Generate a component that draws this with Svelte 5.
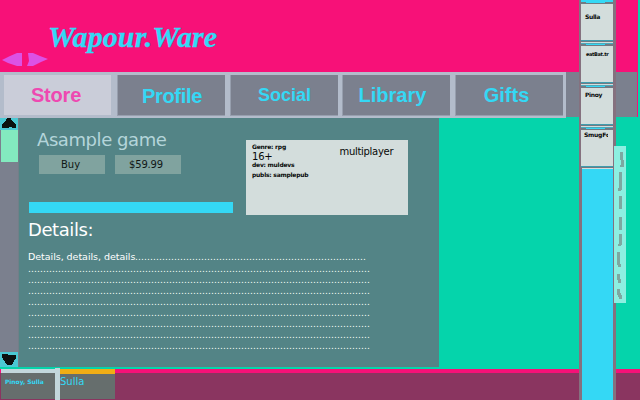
<script>
  const tabs = [
    { label: 'Store', active: true },
    { label: 'Profile' },
    { label: 'Social' },
    { label: 'Library' },
    { label: 'Gifts' }
  ];
  const friends = ['Sulla', 'eatBat.tr', 'Pinoy', 'SmugFc'];
  const dots = (n) => '.'.repeat(n);
  const rows = Array.from({ length: 8 }, () => dots(114));
</script>

<div class="app">
  <header>
    <div class="brand">Wapour.Ware</div>
    <svg class="arrows" width="46" height="13" viewBox="0 0 46 13">
      <path d="M0 7L8 3L15 0H20V13H15L6 10ZM26 0H31L38 3L46 6L39 9L31 13H25L27 8Z" />
    </svg>
  </header>

  <nav>
    <div class="tabs">
      {#each tabs as tab}
        <div class="tab {tab.label.toLowerCase()}" class:active={tab.active}><span>{tab.label}</span></div>
      {/each}
    </div>
  </nav>

  <main>
    <div class="scroll">
      <div class="up"><svg width="18" height="12" shape-rendering="crispEdges"><path d="M7 0H11L12 3L14 5L16 7V10H12V9H9V10H2V6L5 4Z" /></svg></div>
      <div class="thumb"></div>
      <div class="down"><svg width="18" height="15" shape-rendering="crispEdges"><path d="M2 2H8V3H16V6L14 9L12 13H7L5 10L2 5Z" /></svg></div>
    </div>
    <section class="panel">
      <div class="top">
        <div class="product">
          <h1>Asample game</h1>
          <div class="buttons">
            <div class="button buy">Buy</div>
            <div class="button">$59.99</div>
          </div>
          <div class="bar"></div>
        </div>
        <div class="info">
          <div class="facts">
            <div class="tiny genre">Genre: rpg</div>
            <div class="age">16+</div>
            <div class="tiny dev">dev: muldevs</div>
            <div class="tiny publ">publs: samplepub</div>
          </div>
          <div class="multi">multiplayer</div>
        </div>
      </div>
      <h2>Details:</h2>
      <div class="details">
        <div class="line first-line"><span class="words">Details, details, details</span><span class="dots">{dots(77)}</span></div>
        {#each rows as row}
          <div class="line"><span class="dots">{row}</span></div>
        {/each}
      </div>
    </section>
  </main>

  <footer>
    <div class="chat first"><span>Pinoy, Sulla</span></div>
    <div class="divider"></div>
    <div class="chat second"><span>Sulla</span></div>
  </footer>

  <aside>
    {#each friends as friend, i}
      <div class="friend f{i}">
        <svg width="32" height="6" viewBox="0 0 32 6" shape-rendering="crispEdges">
          <rect width="32" height="4" fill="#34d8f5" />
          {#if i > 0}<rect width="32" height="1" fill="#d3dddc" /><rect y="1" width="32" height="1" fill="#4aa9bb" />{/if}
          <path d="M0 2H5V3H24V2H32V4H0Z" fill="#707a83" />
          <rect y="4" width="32" height="2" fill="#d3dddc" />
        </svg>
        <span>{friend}</span>
      </div>
    {/each}
    <div class="rest"></div>
  </aside>
  <div class="edge"></div>
  <div class="handle">
    <svg width="12" height="157" viewBox="0 0 12 157" shape-rendering="crispEdges" fill="#7da8a1">
      <path d="M6 6H9V14H10V21H6V19H7V14H6ZM5 26H8V44H7V45H4V42H5ZM5 50H8V63H5ZM5 71H8V84H5ZM5 88H8V99H7V100H4V98H5ZM3 106H6V118H7V121H4V119H3ZM3 128H6V133H7V137H4V134H3ZM3 143H6V147H7V149H8V153H5V151H4V149H3Z" />
    </svg>
  </div>
</div>

<style>
  .app { position: relative; width: 640px; height: 400px; overflow: hidden; display: flex; flex-direction: column; background: #05d4ab; font-family: "DejaVu Sans", sans-serif; }
  .app, .app * { box-sizing: border-box; }
  svg { display: block; }
  span { white-space: nowrap; }
  header { height: 72px; width: 638px; background: #f71178; padding-top: 19px; }
  .brand { height: 34px; padding-left: 48px; font: italic bold 30px/36px "Liberation Serif", serif; color: #34d8f5; letter-spacing: .1px; -webkit-text-stroke: .3px #34d8f5; }
  .arrows { margin-left: 2px; fill: #dc52e5; }
  nav { height: 46px; width: 638px; background: linear-gradient(#7b808e, #7b808e) 0 0 / 637px 45px no-repeat, linear-gradient(#f71178, #f71178) 637px 0 / 1px 45px no-repeat; }
  .tabs { width: 566px; height: 46px; background: #b3bccb; display: flex; padding: 3px 0 0 4px; }
  .tab { flex: none; width: 108px; height: 41px; margin-right: 4px; background: #7b808e; border-left: 1px solid #979fae; border-bottom: 1px solid #979fae; display: flex; justify-content: center; font: bold 20px/40px "Liberation Sans", sans-serif; color: #34d8f5; }
  .tab.active { width: 107px; height: 40px; margin-right: 6px; background: #cacdd9; color: #ee49b1; border: 0; letter-spacing: -.2px; padding-right: 3px; }
  .tab.profile { margin-right: 5px; letter-spacing: -.3px; padding-left: 1px; line-height: 42px; }
  .tab.social { font-size: 18px; line-height: 40px; letter-spacing: 0; }
  .tab.library { margin-right: 5px; padding-right: 8px; letter-spacing: 0; }
  .tab.gifts { padding-right: 6px; margin-right: 0; }
  main { display: flex; width: 439px; height: 249px; }
  .scroll { width: 19px; background: #7b808e; border-right: 1px solid #717f88; display: flex; flex-direction: column; }
  .up, .down { width: 18px; background: #4bc8d3; fill: #0c1110; }
  .up { height: 12px; }
  .down { height: 15px; margin-top: auto; }
  .thumb { height: 32px; margin-left: 1px; background: #83eabf; }
  .panel { width: 420px; background: #538486; padding-left: 9px; }
  .top { display: flex; height: 97px; }
  .product { width: 218px; padding: 11px 0 0 1px; }
  h1 { margin: 0 0 0 8px; font: 18px/22px "DejaVu Sans", sans-serif; letter-spacing: -.42px; color: #b4d5da; height: 26px; white-space: nowrap; }
  .buttons { display: flex; gap: 10px; padding-left: 10px; height: 47px; }
  .button { width: 66px; height: 19px; background: #80a39f; color: #101816; font-size: 10px; line-height: 20px; text-align: center; padding-right: 4px; letter-spacing: -.2px; }
  .button.buy { padding-right: 3px; letter-spacing: 0; }
  .bar { width: 204px; height: 11px; background: #34d8f5; }
  .info { width: 162px; height: 75px; margin-top: 22px; background: #d3dddc; color: #060908; display: flex; padding: 3px 0 0 6px; }
  .facts { width: 87.5px; }
  .tiny { font-size: 6px; font-weight: bold; line-height: 8px; height: 8px; white-space: nowrap; letter-spacing: -.24px; }
  .age { font-size: 10px; line-height: 11px; height: 10px; letter-spacing: -.2px; }
  .publ { margin-top: 2px; }
  .multi { font-size: 10px; line-height: 17px; letter-spacing: -.3px; }
  h2 { margin: 0; font: 18px/22px "DejaVu Sans", sans-serif; letter-spacing: -.42px; color: #fff; padding-top: 4px; height: 36px; }
  .details { font-size: 9px; color: #fff; }
  .line { height: 11px; line-height: 15px; white-space: nowrap; display: flex; }
  .first-line { line-height: 13px; }
  .first-line .words { line-height: 11px; }
  .words { width: 107px; font-size: 9.5px; letter-spacing: -.04px; }
  .dots { letter-spacing: .139px; }
  footer { margin-top: 2px; height: 31px; background: linear-gradient(#f71178 4px, #8a3560 4px); display: flex; padding-left: 1px; }
  .chat { height: 30px; background: #666e6d; color: #34d8f5; }
  .first { width: 54px; border-top: 4px solid #c3d7dc; font-size: 6px; font-weight: bold; line-height: 17px; padding-left: 4px; letter-spacing: -.05px; }
  .second { width: 55px; border-top: 5px solid #f0ad15; font-size: 10px; line-height: 16px; }
  .divider { width: 5px; height: 32px; margin-top: -1px; background: #c3d7dc; }
  aside { position: absolute; left: 579px; top: 0; width: 37px; height: 400px; padding: 0 3px 0 2px; background: #85717f; display: flex; flex-direction: column; }
  .friend { height: 42px; flex: none; background: #d3dddc; border-bottom: 1px solid #707a83; box-shadow: inset 0 -1px #3f9daf; color: #060908; font-size: 6px; font-weight: bold; line-height: 8px; letter-spacing: -.35px; overflow: hidden; }
  .friend span { display: block; margin: 7px 0 0 4px; }
  .f1 span { font-size: 5px; margin: 2px 0 0 5px; }
  .f2 span { margin-top: 1px; }
  .f3 span { margin: -1px 0 0 3px; width: 24px; overflow: hidden; letter-spacing: -.25px; }
  .rest { flex: 1; border-top: 1px solid #d3dddc; background: #34d8f5; margin-left: 1px; }
  .edge { position: absolute; left: 638px; top: 0; width: 2px; height: 118px; background: #05d4ab; }
  .handle { position: absolute; left: 614px; top: 146px; width: 12px; height: 157px; background: #8defe1; }
</style>
